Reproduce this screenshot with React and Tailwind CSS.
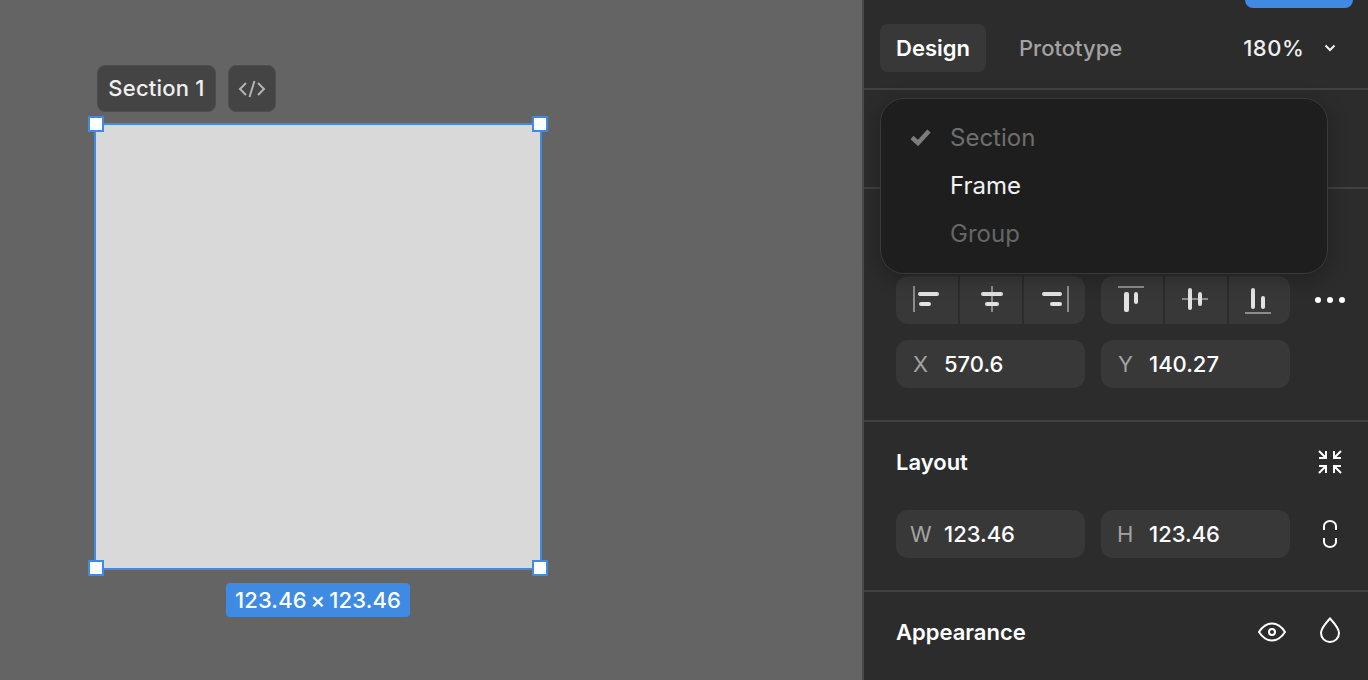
import React from "react"

const Handle = ({ className }) => (
  <div className={`absolute h-4 w-4 border-2 border-[#3f8ae2] bg-white ${className}`} />
)

function Canvas() {
  return (
    <div className="relative h-full flex-1 bg-[#646464]">
      {/* selection label */}
      <div className="absolute left-[97px] top-[65px] flex h-[47px] w-[119px] items-center justify-center rounded-lg border border-[#4e4e4e] bg-[#444444] text-[22px] font-medium tracking-[0.01em] text-[#f0f0f0]">
        Section 1
      </div>
      <div className="absolute left-[228px] top-[65px] flex h-[47px] w-[48px] items-center justify-center rounded-lg border border-[#4e4e4e] bg-[#444444]">
        <svg width="28" height="20" viewBox="0 0 28 20" fill="none" stroke="#b4b4b4" strokeWidth="2">
          <path d="M8 4 2 10l6 6M20 4l6 6-6 6M16.5 2l-5 16" />
        </svg>
      </div>

      {/* frame on canvas */}
      <div className="absolute left-[94px] top-[123px] h-[447px] w-[448px] border-2 border-[#3f8ae2] bg-[#d9d9d9]" />
      <Handle className="left-[88px] top-[116px]" />
      <Handle className="left-[532px] top-[116px]" />
      <Handle className="left-[88px] top-[560px]" />
      <Handle className="left-[532px] top-[560px]" />

      <div className="absolute left-[226px] top-[583px] flex h-[34px] w-[184px] items-center justify-center rounded bg-[#3f8ae2] text-[22px] font-medium tracking-[0.005em] text-white">
        123.46{"\u2009"}×{"\u2009"}123.46
      </div>
    </div>
  )
}

const AlignIcon = ({ children }) => (
  <div className="flex flex-1 items-center justify-center bg-[#383838]">
    <svg width="62" height="48" viewBox="0 0 62 48" fill="#e2e2e2">
      {children}
    </svg>
  </div>
)

const Bar = (props) => <rect rx="2" {...props} />
const Guide = (props) => <rect fill="#8c8c8c" {...props} />

function AlignGroups() {
  return (
    <div className="flex items-center gap-4">
      <div className="flex h-12 w-[189px] gap-0.5 overflow-hidden rounded-xl">
        <AlignIcon>
          <Guide x="17" y="10" width="2" height="26" />
          <Bar x="22" y="16" width="21" height="4" />
          <Bar x="23" y="26" width="12" height="4" />
        </AlignIcon>
        <AlignIcon>
          <Guide x="31" y="10" width="2" height="26" />
          <Bar x="21" y="16" width="22" height="4" />
          <Bar x="25" y="26" width="14" height="4" />
        </AlignIcon>
        <AlignIcon>
          <Bar x="18" y="16" width="20" height="4" />
          <Bar x="26" y="26" width="12" height="4" />
          <Guide x="43" y="10" width="2" height="26" />
        </AlignIcon>
      </div>
      <div className="flex h-12 w-[189px] gap-0.5 overflow-hidden rounded-xl">
        <AlignIcon>
          <Guide x="17" y="10" width="26" height="2" />
          <Bar x="23" y="16" width="5" height="20" />
          <Bar x="33" y="16" width="4" height="12" />
        </AlignIcon>
        <AlignIcon>
          <Guide x="17" y="22" width="26" height="2" />
          <Bar x="23" y="12" width="4" height="22" />
          <Bar x="33" y="16" width="4" height="14" />
        </AlignIcon>
        <AlignIcon>
          <Bar x="22" y="12" width="4" height="21" />
          <Bar x="32" y="20" width="4" height="13" />
          <Guide x="16" y="36" width="26" height="2" />
        </AlignIcon>
      </div>
      <svg className="ml-[9px]" width="30" height="6" viewBox="0 0 30 6" fill="#fff">
        <circle cx="3" cy="3" r="3" />
        <circle cx="15" cy="3" r="3" />
        <circle cx="27" cy="3" r="3" />
      </svg>
    </div>
  )
}

const Field = ({ label, value, labelClass }) => (
  <div className="flex h-12 w-[189px] items-center rounded-xl bg-[#383838] pl-4 text-[22px] font-medium text-white">
    <span className={`font-normal text-[#a3a3a3] ${labelClass}`}>{label}</span>
    {value}
  </div>
)

function Dropdown() {
  return (
    <div className="absolute left-4 top-[98px] h-[176px] w-[448px] rounded-3xl border border-[#3a3a3a] bg-[#1e1e1e] pt-[15px] text-2xl shadow-[0_4px_20px_rgba(0,0,0,0.3)]">
      <div className="flex h-12 items-center pl-[29px] text-[#6e6e6e]">
        <svg className="mb-0.5 mr-[19px]" width="21" height="18" viewBox="0 0 21 18" fill="none" stroke="#7c7c7c" strokeWidth="4.5">
          <path d="M2 9.500 8 15 19 3" />
        </svg>
        Section
      </div>
      <div className="flex h-12 items-center pl-[69px] text-[#f2f2f2]">Frame</div>
      <div className="flex h-12 items-center pl-[69px] text-[#666666]">Group</div>
    </div>
  )
}

function Panel() {
  return (
    <div className="relative flex h-full w-[506px] shrink-0 flex-col border-l-2 border-[#4a4a4a] bg-[#2c2c2c]">
      {/* tabs */}
      <div className="h-[90px] shrink-0 border-b-2 border-[#414141]">
        <div className="flex justify-end pr-[15px]">
          <div className="h-2 w-[108px] rounded-b-lg bg-[#3f8ae2]" />
        </div>
        <div className="mt-4 flex items-center pl-4 text-[22px]">
          <div className="flex h-12 w-[106px] items-center justify-center rounded-lg bg-[#383838] font-semibold text-white">
            Design
          </div>
          <div className="ml-[33px] font-medium text-[#a3a3a3]">Prototype</div>
          <div className="ml-[121px] font-medium tracking-wide text-[#f0f0f0]">180%</div>
          <svg className="ml-5" width="12" height="8" viewBox="0 0 12 8" fill="none" stroke="#f0f0f0" strokeWidth="2">
            <path d="m1.500 1.500 4.500 4.500 4.500-4.500" />
          </svg>
        </div>
      </div>

      <div className="h-[99px] shrink-0 border-b-2 border-[#414141]" />

      {/* position */}
      <div className="flex h-[233px] shrink-0 flex-col justify-end gap-4 border-b-2 border-[#414141] pb-8 pl-8">
        <AlignGroups />
        <div className="flex gap-4">
          <Field label="X" value="570.6" labelClass="w-8 pl-px" />
          <Field label="Y" value="140.27" labelClass="w-8 pl-px" />
        </div>
      </div>

      {/* layout */}
      <div className="h-[170px] shrink-0 border-b-2 border-[#414141] pl-8 pt-7">
        <div className="flex h-6 items-center justify-between pr-[26px] text-[22px] font-semibold text-white">
          Layout
          <svg width="24" height="24" viewBox="0 0 24 24" fill="none" stroke="#fff" strokeWidth="2">
            <path d="M1 1l7 7M8 1v7H1M23 1l-7 7M16 1v7h7M1 23l7-7M8 23v-7H1M23 23l-7-7M16 23v-7h7" />
          </svg>
        </div>
        <div className="mt-9 flex items-center gap-4">
          <Field label="W" value="123.46" labelClass="-ml-0.5 w-[34px]" />
          <Field label="H" value="123.46" labelClass="w-8" />
          <svg className="ml-[17px]" width="14" height="28" viewBox="0 0 14 28" fill="none" stroke="#fff" strokeWidth="2">
            <path d="M1 10V6a6 5 0 0 1 12 0v4M1 18v4a6 5 0 0 0 12 0v-4" />
          </svg>
        </div>
      </div>

      {/* appearance */}
      <div className="flex h-[88px] items-start pl-8 pr-[28px] pt-7 text-[22px] font-semibold text-white">
        <span className="flex-1 leading-6">Appearance</span>
        <svg className="mt-0.5" width="28" height="20" viewBox="0 0 28 20" fill="none" stroke="#fff" strokeWidth="2">
          <path d="M1 10c3.500-5.500 8-8.500 13-8.500S23.500 4.500 27 10c-3.500 5.500-8 8.500-13 8.500S4.500 15.500 1 10Z" />
          <circle cx="14" cy="10" r="3" />
        </svg>
        <svg className="-mt-[3px] ml-[34px]" width="20" height="26" viewBox="0 0 20 26" fill="none" stroke="#fff" strokeWidth="2">
          <path d="M10 1.500c4.500 5 9 9.500 9 14.500a9 9 0 0 1-18 0C1 11 5.500 6.500 10 1.500Z" />
        </svg>
      </div>

      <Dropdown />
    </div>
  )
}

export default function App() {
  return (
    <div className="flex h-[680px] w-full overflow-hidden font-['Inter',sans-serif]">
      <Canvas />
      <Panel />
    </div>
  )
}
